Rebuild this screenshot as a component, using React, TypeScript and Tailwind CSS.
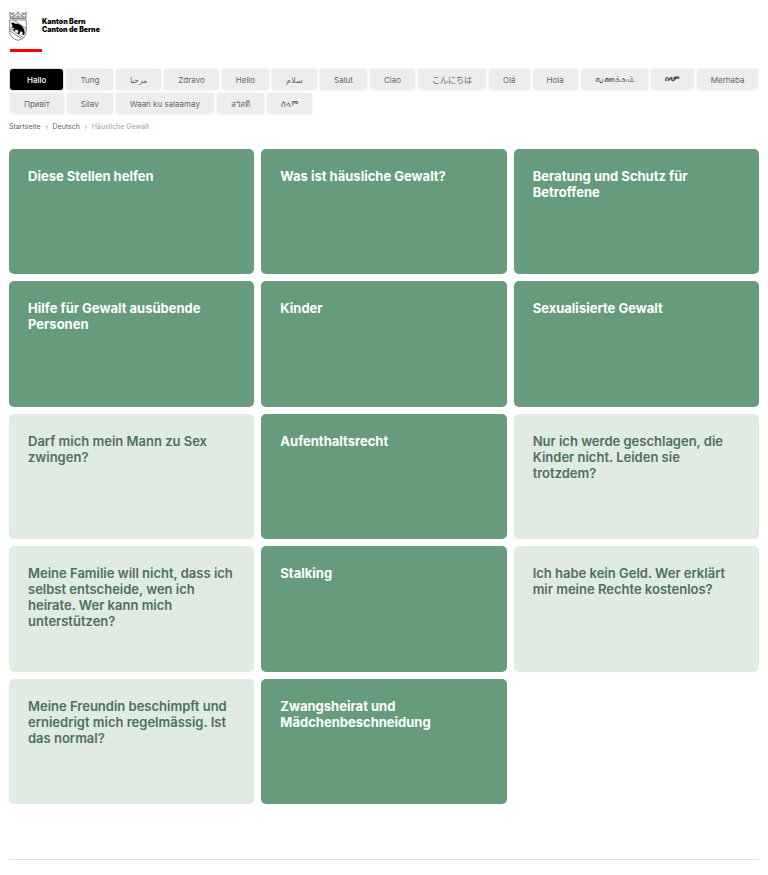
import React from 'react';
import { ChevronRight } from 'lucide-react';

const languages = [
  { label: 'Hallo', lang: 'de', active: true },
  { label: 'Tung', lang: 'sq' },
  { label: 'مرحبا', lang: 'ar' },
  { label: 'Zdravo', lang: 'hr' },
  { label: 'Hello', lang: 'en' },
  { label: 'سلام', lang: 'fa' },
  { label: 'Salut', lang: 'fr' },
  { label: 'Ciao', lang: 'it' },
  { label: 'こんにちは', lang: 'ja' },
  { label: 'Olá', lang: 'pt' },
  { label: 'Hola', lang: 'es' },
  { label: 'வணக்கம்', lang: 'ta', text: 'text-[9px] leading-[9px] pb-[3px] text-[#444]' },
  { label: 'ሰላም', lang: 'ti', text: 'text-[7px] font-bold text-[#222]' },
  { label: 'Merhaba', lang: 'tr' },
  { label: 'Привіт', lang: 'uk' },
  { label: 'Silav', lang: 'ku' },
  { label: 'Waan ku salaamay', lang: 'so' },
  { label: 'สวัสดี', lang: 'th' },
  { label: 'ሰላም', lang: 'am' },
];

const topics = [
  { title: 'Diese Stellen helfen' },
  { title: 'Was ist häusliche Gewalt?' },
  { title: 'Beratung und Schutz für Betroffene' },
  { title: 'Hilfe für Gewalt ausübende Personen' },
  { title: 'Kinder' },
  { title: 'Sexualisierte Gewalt' },
  { title: 'Darf mich mein Mann zu Sex zwingen?', question: true },
  { title: 'Aufenthaltsrecht' },
  { title: 'Nur ich werde geschlagen, die Kinder nicht. Leiden sie trotzdem?', question: true },
  { title: 'Meine Familie will nicht, dass ich selbst entscheide, wen ich heirate. Wer kann mich unterstützen?', question: true },
  { title: 'Stalking' },
  { title: 'Ich habe kein Geld. Wer erklärt mir meine Rechte kostenlos?', question: true },
  { title: 'Meine Freundin beschimpft und erniedrigt mich regelmässig. Ist das normal?', question: true },
  { title: 'Zwangsheirat und Mädchenbeschneidung' },
];

const Crest: React.FC = () => (
  <svg viewBox="0 0 18 30" className="w-[18px] h-[30px]" fill="none" stroke="#333" strokeWidth="0.6" aria-hidden="true">
    {/* Crown */}
    <path d="M1 7.500V1l2 3 1-2.500 1.500 3.500L7 3.500 9 .8l2 2.700 1.500 1.500L14 1.500 15 4l2-3v6.500z" />
    <path d="M1 6h16M4 4.500v2M9 2.500v4M14 4.500v2" />
    {/* Shield */}
    <path d="M.7 9h16.600v11c0 5-3.500 8-8.300 9.300C4.200 28 .7 25 .7 20z" />
    <path d="M4.500 9l12.800 8.500M.7 17l13.300 9.500M.7 19.500l11.500 8" />
    {/* Bear */}
    <path
      d="M2.200 12l1.900-.6 2 1.300 3.700.6 3.100 2 2.200 3.200.6 3.500-.9 1.900-1.400-.5.500-1.900-1.500-1.200-1.400.4-.4 1.900-1.500.5-.4-.9.800-1.400-.3-1.500-2.200-.8-1.300 1.100-1.700-.2.200-.9 1.300-.5-.5-1.500-1.700.4-.8-.7 1.300-.8z"
      fill="#000"
      stroke="#000"
      strokeWidth="0.300"
    />
  </svg>
);

const Logo: React.FC = () => (
  <a href="/" className="flex w-fit flex-col text-black">
    <span className="flex items-start gap-[15px]">
      <Crest />
      <span className="pt-[7px] text-[7px] leading-[8px] font-black">
        Kanton Bern
        <br />
        Canton de Berne
      </span>
    </span>
    <span className="mt-2 ml-px h-[3px] w-8 bg-[#f00]" />
  </a>
);

const LanguageNav: React.FC = () => (
  <nav aria-label="Sprache" className="flex flex-wrap gap-[3px] pl-px">
    {languages.map(({ label, lang, active, text = 'text-[8px]' }) => (
      <a
        key={lang}
        href={`/${lang}`}
        lang={lang}
        className={`flex h-[21px] items-center rounded-[3px] ring-1 ${
          active ? 'bg-black px-[17px] font-medium text-white ring-[#ddd]' : 'bg-[#ededed] px-[14px] text-[#666] ring-[#f7f7f7]'
        }`}
      >
        <span className={text}>{label}</span>
      </a>
    ))}
  </nav>
);

const Breadcrumb: React.FC = () => (
  <nav aria-label="Breadcrumb" className="mt-2 flex items-center gap-[3px] text-[7px] leading-[10px] text-[#5c6370]">
    <a href="/">Startseite</a>
    <ChevronRight className="w-[6px] h-[6px]" />
    <a href="/de">Deutsch</a>
    <ChevronRight className="w-[6px] h-[6px]" />
    <span className="text-[#9a9faa]">Häusliche Gewalt</span>
  </nav>
);

export default function App() {
  return (
    <div className="bg-white px-[9px] pt-[11px] pb-[15px] font-['Inter','Noto_Sans','Noto_Sans_CJK_JP',sans-serif]">
      <header>
        <Logo />
        <div className="mt-[17px]">
          <LanguageNav />
        </div>
        <Breadcrumb />
      </header>

      <main className="mt-[17px] grid grid-cols-3 gap-[7px]">
        {topics.map(({ title, question }) => (
          <a
            key={title}
            href="#"
            className={`aspect-[45/23] rounded-[5px] px-[19px] pt-[19px] text-[13px] leading-4 ${
              question ? 'bg-[#e0ebe2] font-semibold text-[#4f6f5f]' : 'bg-[#669b7c] font-bold text-white'
            }`}
          >
            <h2>{title}</h2>
          </a>
        ))}
      </main>

      <hr className="mt-[55px] border-[#ddd]" />
    </div>
  );
}
